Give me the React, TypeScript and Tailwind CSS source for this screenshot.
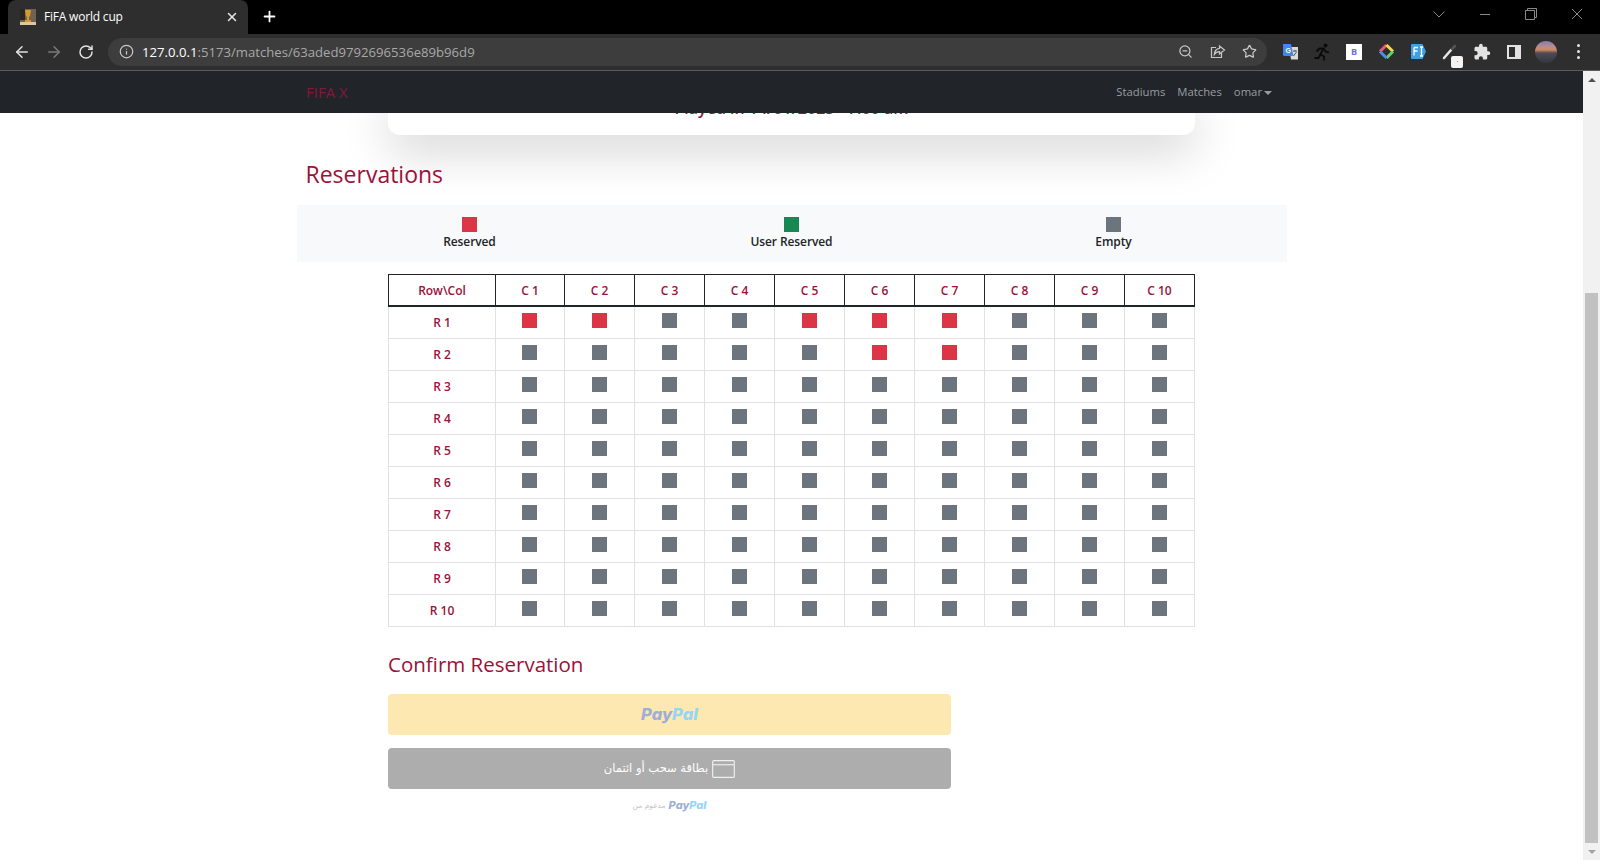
import { ArrowLeft, ArrowRight, Info, Plus, RotateCw, Star, X, ZoomOut } from "lucide-react";
import { MdExtension } from "react-icons/md";

const columns = Array.from({ length: 10 }, (_, i) => i + 1);
const reserved: Record<number, number[]> = {
  1: [1, 2, 5, 6, 7],
  2: [6, 7],
};

const WindowControls = () => (
  <div className="ml-auto flex h-[28px] items-center self-start text-[#8a8a8a]">
    <svg className="mr-[33px]" width="14" height="14" viewBox="0 0 14 14" fill="none" stroke="currentColor">
      <path d="M1.5 4.5 7 10l5.5-5.5" />
    </svg>
    <svg className="mr-[34px]" width="12" height="12" viewBox="0 0 12 12" stroke="currentColor">
      <path d="M1 6.5h10" />
    </svg>
    <svg className="mr-[34px]" width="12" height="12" viewBox="0 0 12 12" fill="none" stroke="currentColor">
      <path d="M.5 2.5h9v9h-9zM2.5 2.5v-2h9v9h-2" />
    </svg>
    <svg className="mr-[17px]" width="12" height="12" viewBox="0 0 12 12" stroke="currentColor">
      <path d="M1 1l10 10M11 1 1 11" />
    </svg>
  </div>
);

const TabStrip = () => (
  <div className="flex h-[34px] items-end bg-black pl-2">
    <div className="flex h-[34px] w-[240px] items-center rounded-t-[8px] bg-[#2e2e2e] pl-3 pr-[9px] text-[12px] tracking-[-0.2px] text-white">
      <svg width="16" height="16" viewBox="0 0 16 16" className="mr-2 shrink-0">
        <rect width="16" height="16" fill="#6e6250" />
        <rect width="5" height="11" fill="#2c2620" />
        <path d="M5 1h6l-1 6-1 1v3h2v2H5v-2h2V8L6 7z" fill="#d79a2a" />
        <rect y="13" width="16" height="3" fill="#d9c8a0" />
      </svg>
      <span>FiFA world cup</span>
      <X className="ml-auto" size={14} strokeWidth={2.5} color="#e8e8e8" />
    </div>
    <Plus className="mb-[9px] ml-[13px]" size={17} strokeWidth={2.5} color="#fff" />
    <WindowControls />
  </div>
);

const ExtensionIcons = () => (
  <div className="ml-[11px] flex items-center gap-[8px]">
    <span className="flex w-6 justify-center">
      <svg width="17" height="17" viewBox="0 0 17 17">
        <path d="M7 4h9v12.5H9z" fill="#dadada" />
        <path d="M11 8h4M13 7v1.5M11.5 13l3-4" stroke="#555" fill="none" />
        <path d="M1 1h8l2.5 12H2.500a1.500 1.500 0 0 1-1.500-1.500z" fill="#4285f4" />
        <text x="3.500" y="9.500" fontSize="7" fontWeight="700" fill="#fff" fontFamily="Liberation Sans">G</text>
      </svg>
    </span>
    <span className="flex w-6 justify-center">
      <svg width="18" height="18" viewBox="0 0 18 18" fill="none" stroke="#0a0a0a" strokeWidth="1.800">
        <circle cx="12.500" cy="2.500" r="2" fill="#0a0a0a" stroke="none" />
        <path d="M3.500 8.500 6.500 5.500H10.500L12.500 8.500 16 9.500" />
        <path d="M10 6 7.500 11.500 11 13.500V17.500" />
        <path d="M7.500 11.500 5.500 15H1.500" />
      </svg>
    </span>
    <span className="flex w-6 justify-center">
      <span className="flex h-4 w-4 items-center justify-center bg-white text-[9px] font-bold text-[#6f6fd0]">B</span>
    </span>
    <span className="flex w-6 justify-center">
      <svg width="17" height="17" viewBox="0 0 17 17" fill="none" strokeWidth="3">
        <path d="M8.500 2 2 8.500" stroke="#f4566d" />
        <path d="M8.500 2 15 8.500" stroke="#f7d84a" />
        <path d="M15 8.500 8.500 15" stroke="#64d26a" />
        <path d="M2 8.500 8.500 15" stroke="#4a90e8" />
      </svg>
    </span>
    <span className="flex w-6 justify-center">
      <svg width="17" height="17" viewBox="0 0 17 17">
        <path d="M2 1h10.500l3.500 7.500L12.500 16H2a1 1 0 0 1-1-1V2a1 1 0 0 1 1-1z" fill="#3ea1e2" />
        <path d="M4 4.500h4M4 4.500v8M4 8h3.500M10 4h3M10 13h3M11.500 4v9" stroke="#fff" strokeWidth="1.300" fill="none" />
      </svg>
    </span>
    <span className="relative flex w-6 justify-center">
      <svg width="18" height="18" viewBox="0 0 18 18" fill="none">
        <path d="M3 15 10 7" stroke="#e6e6e6" strokeWidth="2.500" strokeLinecap="round" />
        <path d="M11 6l3-3" stroke="#555" strokeWidth="2.500" strokeLinecap="round" />
      </svg>
      <span className="absolute -bottom-[7px] left-[13px] flex h-3 w-3 items-center justify-center rounded-[2px] bg-[#f4f4f4]">
        <span className="h-px w-px bg-[#d98a20]" />
      </span>
    </span>
    <span className="flex w-6 justify-center">
      <MdExtension size={18} color="#e3e3e3" />
    </span>
    <span className="flex w-6 justify-center">
      <span className="flex h-[14px] w-[14px] justify-start border-[2px] border-[#e3e3e3] bg-[#2e2e2e]">
        <span className="ml-auto h-full w-[4px] bg-[#e3e3e3]" />
      </span>
    </span>
    <span className="flex w-6 justify-center">
      <span className="h-[22px] w-[22px] rounded-full bg-[linear-gradient(180deg,#7d7ea8_0%,#b98a90_25%,#d08a60_40%,#4c4a58_55%,#33373d_100%)]" />
    </span>
    <span className="flex w-6 flex-col items-center gap-[3px]">
      <span className="h-[3px] w-[3px] rounded-full bg-[#e3e3e3]" />
      <span className="h-[3px] w-[3px] rounded-full bg-[#e3e3e3]" />
      <span className="h-[3px] w-[3px] rounded-full bg-[#e3e3e3]" />
    </span>
  </div>
);

const Toolbar = () => (
  <div className="flex h-[37px] items-center border-b border-[#5c5c5c] bg-[#2e2e2e] pl-[13px] pb-[1px]">
    <ArrowLeft size={18} strokeWidth={2} color="#e3e3e3" />
    <ArrowRight className="ml-[14px]" size={18} strokeWidth={2} color="#7a7a7a" />
    <RotateCw className="ml-[15px]" size={16} strokeWidth={2.2} color="#e3e3e3" />
    <div className="ml-[14px] flex h-7 w-[1159px] items-center rounded-full bg-[#3d3d3d] pl-[11px] pr-[10px] text-[13.15px]">
      <Info size={15} color="#c8c8c8" />
      <span className="mt-[2px] ml-[8px] text-white">127.0.0.1</span>
      <span className="mt-[2px] text-[#a8a8a8]">:5173/matches/63aded9792696536e89b96d9</span>
      <ZoomOut className="ml-auto" size={15} color="#c8c8c8" />
      <svg className="ml-[17px]" width="16" height="16" viewBox="0 0 16 16" fill="none" stroke="#c8c8c8" strokeWidth="1.200">
        <path d="M6 3.500H1.500v10h10V9" />
        <path d="M9.500 2 14.500 6 9.500 10V7.700C7 7.700 5.500 8.600 4.300 10.500 4.500 7 6.500 4.700 9.500 4.300z" />
      </svg>
      <Star className="ml-[16px]" size={15} color="#c8c8c8" />
    </div>
    <ExtensionIcons />
  </div>
);

const Navbar = () => (
  <nav className="flex h-[42px] shrink-0 items-center bg-[#212529] pl-[306px] pr-[311px] text-[11.3px] text-[#9a9da0]">
    <span className="text-[15px] text-[#801a38]">FIFA X</span>
    <span className="mt-px ml-auto">Stadiums</span>
    <span className="mt-px ml-3">Matches</span>
    <span className="mt-px ml-3 flex items-center">
      omar
      <span className="ml-[2px] h-0 w-0 border-x-[4px] border-t-[4px] border-x-transparent border-t-[#9a9da0]" />
    </span>
  </nav>
);

const Seat = ({ className }: { className: string }) => <div className={`h-[15px] w-[15px] ${className}`} />;

const LegendItem = ({ color, label }: { color: string; label: string }) => (
  <div className="flex flex-col items-center">
    <Seat className={color} />
    <span className="mt-px text-[12px] leading-[18px] font-semibold tracking-[-0.1px] text-[#212529]">{label}</span>
  </div>
);

const SeatTable = () => (
  <table className="mx-auto mt-3 w-[807px] table-fixed border-collapse text-[12px] font-semibold text-[#9b1239]">
    <thead>
      <tr className="h-[31px]">
        <th className="w-[107px] border border-b-2 border-[#212529] pt-[3px] font-semibold">Row\Col</th>
        {columns.map((c) => (
          <th
            key={c}
            className={`border border-b-2 border-[#212529] pt-[3px] font-semibold ${c === 1 ? "w-[69px]" : "w-[70px]"}`}
          >
            C {c}
          </th>
        ))}
      </tr>
    </thead>
    <tbody>
      {columns.map((r) => (
        <tr key={r} className={r === 1 ? "h-[33px]" : "h-8"}>
          <td className={`border border-[#dee2e6] text-center ${r === 1 ? "pt-[2px]" : "pt-[1px]"}`}>R {r}</td>
          {columns.map((c) => (
            <td key={c} className="border border-[#dee2e6] pt-[6px] align-top">
              <Seat
                className={`${c === 1 ? "ml-[26px]" : "mx-auto"} ${reserved[r]?.includes(c) ? "bg-[#dc3545]" : "bg-[#6c757d]"}`}
              />
            </td>
          ))}
        </tr>
      ))}
    </tbody>
  </table>
);

const PayPalWord = ({ className }: { className: string }) => (
  <span className={`font-['Inter',sans-serif] font-extrabold italic ${className}`}>
    <span className="text-[#9fafd6]">Pay</span>
    <span className="text-[#97d5f5]">Pal</span>
  </span>
);

const PaymentButtons = () => (
  <div className="w-[563px]">
    <div className="flex h-[41px] items-center justify-center rounded-[4px] bg-[#fee8b2]">
      <PayPalWord className="text-[16.5px]" />
    </div>
    <div className="mt-[13px] flex h-[41px] items-center justify-center gap-[4px] rounded-[4px] bg-[#adadad] text-white">
      <span dir="rtl" className="font-['DejaVu_Sans',sans-serif] text-[11.5px]">
        بطاقة سحب أو ائتمان
      </span>
      <svg width="23" height="18" viewBox="0 0 24 19" fill="none" stroke="#f0f0f0" strokeWidth="1.200">
        <rect x="0.600" y="0.600" width="22.800" height="17.800" rx="1" />
        <path d="M1 5h22" />
      </svg>
    </div>
    <div className="mt-[8px] flex items-center justify-center gap-[3px]">
      <span dir="rtl" className="font-['DejaVu_Sans',sans-serif] text-[7.500px] text-[#c4c4c4]">
        مدعوم من
      </span>
      <PayPalWord className="text-[11px]" />
    </div>
  </div>
);

const Scrollbar = () => (
  <div className="flex w-[17px] shrink-0 flex-col items-center bg-[#f1f1f1]">
    <div className="mt-[7px] h-0 w-0 border-x-[4px] border-b-[4px] border-x-transparent border-b-[#505050]" />
    <div className="mt-[211px] h-[550px] w-[13px] bg-[#c1c1c1]" />
    <div className="mt-[7px] h-0 w-0 border-x-[4px] border-t-[4px] border-x-transparent border-t-[#a3a3a3]" />
  </div>
);

export default function App() {
  return (
    <div className="flex h-[860px] flex-col overflow-hidden bg-white font-['Open_Sans','Liberation_Sans',sans-serif]">
      <TabStrip />
      <Toolbar />
      <div className="flex min-h-0 flex-1">
        <div className="flex min-w-0 flex-1 flex-col">
          <Navbar />
          <main className="min-h-0 flex-1 overflow-hidden">
            <div className="mx-auto -mt-[18px] flex h-[40px] w-[807px] items-start justify-center rounded-b-[12px] bg-white pt-[2px] text-[16px] font-semibold text-[#9b1239] shadow-[0_16px_48px_rgba(0,0,0,0.175)]">
              <span className="leading-[22px]">Played in 14/01/2023 - 7:00 am</span>
            </div>
            <section className="mx-auto mt-[22px] w-[990px]">
              <h3 className="ml-[9px] text-[23px] leading-[34px] font-medium text-[#9b1239]">Reservations</h3>
              <div className="mt-[14px] grid h-[57px] grid-cols-3 items-start bg-[#f8f9fa] px-3 pt-3">
                <LegendItem color="bg-[#dc3545]" label="Reserved" />
                <LegendItem color="bg-[#198754]" label="User Reserved" />
                <LegendItem color="bg-[#6c757d]" label="Empty" />
              </div>
              <SeatTable />
            </section>
            <section className="mx-auto mt-[22px] w-[807px]">
              <h4 className="text-[20.5px] leading-[30px] font-medium text-[#9b1239]">Confirm Reservation</h4>
              <div className="mt-[15px]">
                <PaymentButtons />
              </div>
            </section>
          </main>
        </div>
        <Scrollbar />
      </div>
    </div>
  );
}
